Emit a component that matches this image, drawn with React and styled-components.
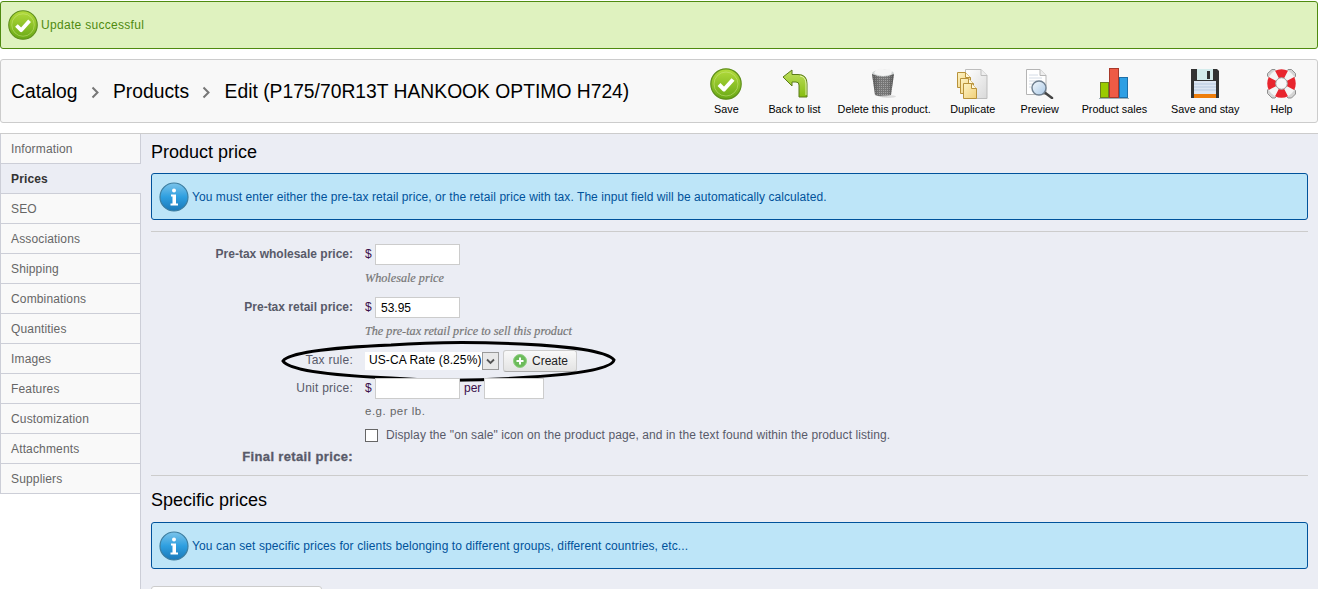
import React from "react";
import styled, { createGlobalStyle } from "styled-components";

// STYLES

const GlobalStyle = createGlobalStyle`
  html, body {
    margin: 0;
    padding: 0;
    height: 589px;
    overflow: hidden;
    background: #fff;
    font-family: "Liberation Sans", Arial, sans-serif;
    font-size: 12px;
  }
`;

const SuccessBar = styled.div`
  display: flex;
  align-items: center;
  gap: 3px;
  box-sizing: border-box;
  height: 48px;
  margin: 1px 0 10px;
  padding-left: 7px;
  background: #dff2bf;
  border: 1px solid #4f8a10;
  border-radius: 3px;
  color: #4f8a10;
  letter-spacing: 0.3px;
`;

const Toolbar = styled.div`
  display: flex;
  align-items: center;
  justify-content: space-between;
  box-sizing: border-box;
  height: 64px;
  margin-bottom: 10px;
  padding: 0 2px 0 10px;
  background: #f8f8f8;
  border: 1px solid #ccc;
  border-radius: 3px;
`;

const Breadcrumb = styled.div`
  display: flex;
  align-items: center;
  padding-top: 2px;
  font-size: 19.3px;
  color: #000;
`;

const Chevron = styled.span`
  width: 35.5px;
  display: flex;
  justify-content: center;
`;

const Actions = styled.div`
  display: flex;
  align-items: flex-start;
  padding-top: 1px;
`;

const Action = styled.div`
  display: flex;
  flex-direction: column;
  align-items: center;
  box-sizing: border-box;
  min-width: 67px;
  padding: 0 8.5px;
  margin-left: ${(props) => props.$gap || 0}px;
  font-size: 10.8px;
  line-height: 13px;
  color: #000;
  white-space: nowrap;
`;

const ActionIcon = styled.div`
  height: 33px;
  margin-bottom: 3px;
  display: flex;
  align-items: center;
  justify-content: center;
`;

const Main = styled.div`
  display: flex;
  height: 456px;
  border-top: 1px solid #ccc;
`;

const Sidebar = styled.div`
  box-sizing: border-box;
  width: 141px;
  flex: none;
  border-right: 1px solid #ccced7;
`;

const Tab = styled.div`
  box-sizing: border-box;
  height: 30px;
  padding-left: 10px;
  line-height: 31px;
  background: ${(props) => (props.$active ? "#ebedf4" : "#f9f9f9")};
  border-bottom: 1px solid #ccced7;
  border-left: 1px solid #ccced7;
  margin-right: ${(props) => (props.$active ? "-1px" : "0")};
  color: ${(props) => (props.$active ? "#333" : "#666")};
  font-weight: ${(props) => (props.$active ? "bold" : "normal")};
  letter-spacing: 0.15px;
`;

const Content = styled.div`
  flex: 1;
  min-width: 0;
  box-sizing: border-box;
  padding: 0 10px;
  background: #ebedf4;
  overflow: hidden;
`;

const Heading = styled.h2`
  margin: ${(props) => props.$top}px 0 ${(props) => props.$bottom}px;
  font-size: 18px;
  line-height: 21px;
  font-weight: normal;
  color: #000;
`;

const InfoBox = styled.div`
  display: flex;
  align-items: center;
  gap: 3px;
  box-sizing: border-box;
  height: 47px;
  padding-left: 7px;
  background: #bde5f8;
  border: 1px solid #00529b;
  border-radius: 3px;
  color: #00529b;
  letter-spacing: ${(props) => props.$tracking}px;
`;

const Divider = styled.div`
  height: 1px;
  background: #ccc;
  margin: ${(props) => props.$top}px 0 0;
`;

const FormRow = styled.div`
  position: relative;
  display: flex;
  align-items: center;
  margin-top: ${(props) => props.$top}px;
  height: ${(props) => props.$height}px;
`;

const Label = styled.label`
  box-sizing: border-box;
  width: 214px;
  padding: 0 12px 2px 0;
  flex: none;
  text-align: right;
  font-weight: ${(props) => (props.$plain ? "normal" : "bold")};
  color: #585a69;
  letter-spacing: ${(props) => (props.$plain ? "0.25px" : "0")};
`;

const Currency = styled.span`
  width: 10px;
  flex: none;
  padding-bottom: 2px;
  color: #3a0f4a;
`;

const TextInput = styled.div`
  box-sizing: border-box;
  width: ${(props) => props.$width}px;
  height: 21px;
  padding: 3px 0 0 5px;
  background: #fff;
  border: 1px solid #ccc;
  color: #000;
  line-height: 14px;
`;

const Per = styled.span`
  margin: 0 3px 2px 4px;
  color: #3a0f4a;
`;

const Hint = styled.div`
  margin: ${(props) => props.$top}px 0 0 214px;
  line-height: 16px;
  font-family: "Liberation Serif", Georgia, serif;
  font-style: italic;
  font-size: 12.2px;
  color: #777;
  -webkit-text-stroke: 0.2px #777;
`;

const PlainHint = styled.div`
  margin: 4px 0 0 214px;
  line-height: 16px;
  font-size: 11.5px;
  color: #666;
  letter-spacing: 0.5px;
`;

const SelectBox = styled.div`
  display: flex;
  box-sizing: border-box;
  width: 134px;
  height: 18px;
  background: #fff;
  line-height: 17px;
  color: #000;
  padding-left: 4px;
  position: relative;
  letter-spacing: 0.1px;
`;

const SelectArrow = styled.div`
  position: absolute;
  right: 0;
  top: 0;
  box-sizing: border-box;
  width: 17px;
  height: 18px;
  display: flex;
  align-items: center;
  justify-content: center;
  background: #e8e8e8;
  border: 1px solid #9a9a9a;
`;

const CreateButton = styled.div`
  display: flex;
  align-items: center;
  gap: 5px;
  box-sizing: border-box;
  width: 74px;
  height: 22px;
  margin-left: 4px;
  padding-left: 9px;
  background: linear-gradient(#f9f9f9, #e3e3e3);
  border: 1px solid #ccc;
  border-bottom-color: #aaa;
  border-radius: 3px;
  color: #222;
`;

const Oval = styled.svg`
  position: absolute;
  left: 130px;
  top: -10px;
  pointer-events: none;
`;

const CheckBox = styled.div`
  box-sizing: border-box;
  width: 13px;
  height: 13px;
  margin-right: 8px;
  background: #fff;
  border: 1px solid #666;
`;

const CheckText = styled.span`
  color: #585a69;
  letter-spacing: 0.09px;
`;

const WideLabel = styled.label`
  box-sizing: border-box;
  width: 214px;
  padding-right: 12px;
  text-align: right;
  font-weight: bold;
  font-size: 13px;
  letter-spacing: 0.35px;
  color: #585a69;
  -webkit-text-stroke: 0.3px #585a69;
`;

const GhostButton = styled.div`
  box-sizing: border-box;
  width: 171px;
  height: 30px;
  margin-top: 17px;
  background: #fff;
  border: 1px solid #ccc;
  border-radius: 3px;
`;

// ICONS

const BadgeIcon = ({ size, id }) => (
  <svg width={size} height={size} viewBox="0 0 32 32">
    <defs>
      <linearGradient id={id} x1="0" y1="0" x2="0" y2="1">
        <stop offset="0" stopColor="#b4dc3c" />
        <stop offset="1" stopColor="#69a915" />
      </linearGradient>
    </defs>
    <circle cx="16" cy="16" r="15.2" fill={`url(#${id})`} stroke="#5f8f1c" strokeWidth="1.2" />
    <circle cx="16" cy="16" r="12" fill="none" stroke="#d2ea8c" strokeWidth="0.8" opacity="0.6" />
    <path d="M9 16.5l5 5 9-10" fill="none" stroke="#fff" strokeWidth="4" strokeLinejoin="round" />
  </svg>
);

const InfoIcon = ({ id }) => (
  <svg width="30" height="30" viewBox="0 0 30 30">
    <defs>
      <linearGradient id={id} x1="0" y1="0" x2="0" y2="1">
        <stop offset="0" stopColor="#7cc4ea" />
        <stop offset="0.5" stopColor="#2e9fe0" />
        <stop offset="1" stopColor="#1a78b8" />
      </linearGradient>
    </defs>
    <circle cx="15" cy="15" r="14" fill={`url(#${id})`} stroke="#3d7d9f" strokeWidth="1.2" />
    <circle cx="15" cy="8.5" r="2" fill="#fff" />
    <path d="M12 12.5h5v9h2v2h-7.500v-2h2v-7h-1.500z" fill="#fff" />
  </svg>
);

const BackIcon = () => (
  <svg width="26" height="29" viewBox="0 0 26 29">
    <defs>
      <linearGradient id="backFill" x1="0" y1="0" x2="0" y2="1">
        <stop offset="0" stopColor="#c0e060" />
        <stop offset="1" stopColor="#86bd10" />
      </linearGradient>
    </defs>
    <path
      d="M1 8L10 1v4.500h6q9 0 9 9V28h-8V16q0-3-3-3h-4v4z"
      fill="url(#backFill)"
      stroke="#5b7a1a"
      strokeLinejoin="round"
    />
    <path d="M18 7q6 1 6 8v11" fill="none" stroke="#e2f2ac" strokeWidth="1" />
  </svg>
);

const TrashIcon = () => (
  <svg width="26" height="31" viewBox="0 0 26 31">
    <defs>
      <pattern id="mesh" width="2" height="2" patternUnits="userSpaceOnUse">
        <rect width="2" height="2" fill="#767676" />
        <rect width="1" height="1" fill="#a2a2a2" />
      </pattern>
      <linearGradient id="binShade" x1="0" y1="0" x2="1" y2="0">
        <stop offset="0" stopColor="#333" stopOpacity="0.45" />
        <stop offset="0.35" stopColor="#333" stopOpacity="0" />
        <stop offset="0.7" stopColor="#333" stopOpacity="0" />
        <stop offset="1" stopColor="#333" stopOpacity="0.5" />
      </linearGradient>
    </defs>
    <ellipse cx="12" cy="5.500" rx="11" ry="4" fill="#cfd3d3" />
    <path d="M3 5l2-3 4-1.500 5 1 4-1 3 3-1 3-8 1.500-7-1.500z" fill="#f5f5f5" />
    <path d="M1 6q11 5 22 0l-3 21q-8 3-16 0z" fill="url(#mesh)" />
    <path d="M1 6q11 5 22 0l-3 21q-8 3-16 0z" fill="url(#binShade)" />
    <ellipse cx="17" cy="28.500" rx="8" ry="1.500" fill="#ccc" opacity="0.6" />
  </svg>
);

const DuplicateIcon = () => {
  const page = "M0 0h8l5 5v10H0z";
  return (
    <svg width="31" height="30" viewBox="0 0 31 30">
      <defs>
        <linearGradient id="paperFill" x1="0" y1="0" x2="1" y2="1">
          <stop offset="0" stopColor="#fff" />
          <stop offset="1" stopColor="#d9d9d9" />
        </linearGradient>
        <linearGradient id="goldFill" x1="0" y1="0" x2="1" y2="1">
          <stop offset="0" stopColor="#fdf3c4" />
          <stop offset="1" stopColor="#f1cf78" />
        </linearGradient>
      </defs>
      <path d="M8.500 .5H24l6 6v23H8.500z" fill="url(#paperFill)" stroke="#bdbdbd" />
      <path d="M24 .5v6h6" fill="#eee" stroke="#bdbdbd" />
      {[
        [0.5, 3.5],
        [3.5, 9.5],
        [6.5, 14.5],
      ].map(([x, y]) => (
        <g key={y} transform={`translate(${x} ${y})`}>
          <path d={page} fill="url(#goldFill)" stroke="#b8923a" />
          <path d="M8 0v5h5" fill="#fff8dc" stroke="#b8923a" />
        </g>
      ))}
    </svg>
  );
};

const PreviewIcon = () => (
  <svg width="30" height="30" viewBox="0 0 30 30">
    <defs>
      <linearGradient id="lensFill" x1="0" y1="0" x2="1" y2="1">
        <stop offset="0" stopColor="#f4f9fd" />
        <stop offset="1" stopColor="#a9c8e6" />
      </linearGradient>
    </defs>
    <path d="M1.500 .5H15l6 6v19H1.500z" fill="#fff" stroke="#b5b5b5" />
    <path d="M15 .5v6h6" fill="#eee" stroke="#b5b5b5" />
    <path d="M4 6h9M4 9h13M4 12h13M4 15h6M4 18h5" stroke="#d4dce6" />
    <path d="M19 23l8 6" stroke="#444" strokeWidth="2.500" strokeLinecap="round" />
    <circle cx="14" cy="19" r="7" fill="url(#lensFill)" stroke="#6f7f8f" strokeWidth="1.400" />
  </svg>
);

const SalesIcon = () => (
  <svg width="30" height="31" viewBox="0 0 30 31">
    <rect x="1.500" y="14.500" width="8" height="15" fill="#9acb00" stroke="#6b7f20" />
    <rect x="10.500" y="0.500" width="9" height="29" fill="#ee5b45" stroke="#a8392a" />
    <rect x="20.500" y="9.500" width="8" height="20" fill="#2d9fe4" stroke="#1d6fa8" />
    <rect x="0" y="30" width="30" height="1" fill="#9cb0b8" />
  </svg>
);

const DiskIcon = () => (
  <svg width="28" height="29" viewBox="0 0 28 29">
    <path d="M0 0h26l2 2v27H0z" fill="#333" />
    <rect x="6" y="0" width="16" height="11" fill="#d4ecec" />
    <rect x="16" y="2" width="3" height="8" fill="#333" />
    <rect x="3" y="12" width="22" height="13" fill="#dde6f2" />
    <path d="M3 15h22M3 18h22M3 21h22" stroke="#b5c8e0" />
    <rect x="3" y="25" width="22" height="4" fill="#ee7d0a" />
  </svg>
);

const BuoyIcon = () => (
  <svg width="31" height="31" viewBox="0 0 31 31">
    <path d="M6 1.500h3l2 2h9l2-2h3.500l4 4v3l-2 2v10l2 2v3.500l-4 4H22l-2-2h-9l-2 2H6l-4.500-4.500V22l2-2v-10l-2-2V5.500z" fill="#d4d4d4" stroke="#8f8f8f" />
    <circle cx="15.500" cy="15.500" r="10" fill="none" stroke="#f4f4f4" strokeWidth="8.500" />
    <circle
      cx="15.500"
      cy="15.500"
      r="10"
      fill="none"
      stroke="#e8252e"
      strokeWidth="8.500"
      pathLength="100"
      strokeDasharray="15 10"
      strokeDashoffset="7.500"
    />
    <circle cx="15.500" cy="15.500" r="5.800" fill="#f8f8f8" stroke="#999" />
  </svg>
);

const ChevronIcon = () => (
  <svg width="9" height="13" viewBox="0 0 9 13">
    <path d="M1.500 1.500l5 5-5 5" fill="none" stroke="#777" strokeWidth="2" />
  </svg>
);

const PlusIcon = () => (
  <svg width="14" height="14" viewBox="0 0 14 14">
    <circle cx="7" cy="7" r="6.500" fill="#6cbb5a" stroke="#8fcf80" />
    <path d="M7 3.500v7M3.500 7h7" stroke="#fff" strokeWidth="2" />
  </svg>
);

const tabs = [
  "Information",
  "Prices",
  "SEO",
  "Associations",
  "Shipping",
  "Combinations",
  "Quantities",
  "Images",
  "Features",
  "Customization",
  "Attachments",
  "Suppliers",
];

const actions = [
  { label: "Save", icon: <BadgeIcon size={32} id="saveFill" /> },
  { label: "Back to list", icon: <BackIcon /> },
  { label: "Delete this product.", icon: <TrashIcon /> },
  { label: "Duplicate", icon: <DuplicateIcon /> },
  { label: "Preview", icon: <PreviewIcon /> },
  { label: "Product sales", icon: <SalesIcon /> },
  { label: "Save and stay", icon: <DiskIcon />, gap: 7 },
  { label: "Help", icon: <BuoyIcon /> },
];

const App = () => {
  return (
    <>
      <GlobalStyle />
      <SuccessBar>
        <BadgeIcon size={30} id="okFill" />
        Update successful
      </SuccessBar>

      <Toolbar>
        <Breadcrumb>
          Catalog
          <Chevron>
            <ChevronIcon />
          </Chevron>
          Products
          <Chevron>
            <ChevronIcon />
          </Chevron>
          Edit (P175/70R13T HANKOOK OPTIMO H724)
        </Breadcrumb>
        <Actions>
          {actions.map((a) => (
            <Action key={a.label} $gap={a.gap}>
              <ActionIcon>{a.icon}</ActionIcon>
              {a.label}
            </Action>
          ))}
        </Actions>
      </Toolbar>

      <Main>
        <Sidebar>
          {tabs.map((t) => (
            <Tab key={t} $active={t === "Prices"}>
              {t}
            </Tab>
          ))}
        </Sidebar>

        <Content>
          <Heading $top={8} $bottom={10}>
            Product price
          </Heading>
          <InfoBox $tracking={0.07}>
            <InfoIcon id="infoFillA" />
            You must enter either the pre-tax retail price, or the retail price with tax. The input field will be
            automatically calculated.
          </InfoBox>
          <Divider $top={11} />

          <FormRow $top={12} $height={21}>
            <Label>Pre-tax wholesale price:</Label>
            <Currency>$</Currency>
            <TextInput $width={85} />
          </FormRow>
          <Hint $top={5}>Wholesale price</Hint>

          <FormRow $top={11} $height={21}>
            <Label>Pre-tax retail price:</Label>
            <Currency>$</Currency>
            <TextInput $width={85}>53.95</TextInput>
          </FormRow>
          <Hint $top={5}>The pre-tax retail price to sell this product</Hint>

          <FormRow $top={11} $height={22}>
            <Label $plain>Tax rule:</Label>
            <SelectBox>
              US-CA Rate (8.25%)
              <SelectArrow>
                <svg width="9" height="7" viewBox="0 0 9 7">
                  <path d="M1 1.500l3.500 3.500L8 1.500" fill="none" stroke="#555" strokeWidth="1.800" />
                </svg>
              </SelectArrow>
            </SelectBox>
            <CreateButton>
              <PlusIcon />
              Create
            </CreateButton>
            <Oval width="340" height="44" viewBox="0 0 340 44">
              <path
                d="M2 21C8 12 60 7 110 5C150 2 200 2 240 4C285 6 326 11 333 20C331 28 300 34 250 37C200 41 150 41 110 38C60 36 8 31 2 21Z"
                fill="none"
                stroke="#000"
                strokeWidth="3"
              />
            </Oval>
          </FormRow>

          <FormRow $top={6} $height={21}>
            <Label $plain>Unit price:</Label>
            <Currency>$</Currency>
            <TextInput $width={85} />
            <Per>per</Per>
            <TextInput $width={60} />
          </FormRow>
          <PlainHint>e.g. per lb.</PlainHint>

          <FormRow $top={6} $height={20}>
            <Label />
            <CheckBox />
            <CheckText>
              Display the "on sale" icon on the product page, and in the text found within the product listing.
            </CheckText>
          </FormRow>

          <FormRow $top={2} $height={18}>
            <WideLabel>Final retail price:</WideLabel>
          </FormRow>

          <Divider $top={10} />
          <Heading $top={14} $bottom={11}>
            Specific prices
          </Heading>
          <InfoBox $tracking={0.11}>
            <InfoIcon id="infoFillB" />
            You can set specific prices for clients belonging to different groups, different countries, etc...
          </InfoBox>
          <GhostButton />
        </Content>
      </Main>
    </>
  );
};

export default App;
